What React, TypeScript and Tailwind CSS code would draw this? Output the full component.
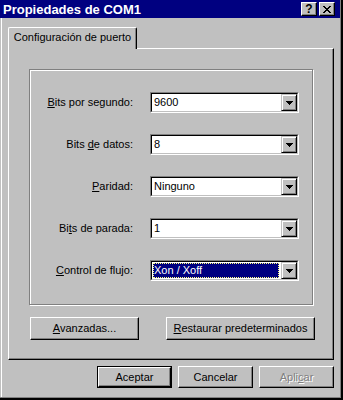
import React from 'react';

const raised =
    'border border-t-white border-l-white border-b-black border-r-black shadow-[inset_-1px_-1px_0_#808080]';

function DropButton() {
    return (
        <div className="flex h-[17px] w-[16px] shrink-0 items-center justify-center border border-t-[#c0c0c0] border-l-[#c0c0c0] border-b-black border-r-black bg-[#c0c0c0] shadow-[inset_1px_1px_0_#fff,inset_-1px_-1px_0_#808080]">
            <svg width="7" height="4" viewBox="0 0 7 4" className="block">
                <path d="M0 0h7v1H0zM1 1h5v1H1zM2 2h3v1H2zM3 3h1v1H3z" fill="#000" />
            </svg>
        </div>
    );
}

function Combo({ value, selected }: { value: string; selected?: boolean }) {
    return (
        <div className="h-[21px] w-[149px] border border-t-[#808080] border-l-[#808080] border-b-white border-r-white">
            <div className="flex h-full border border-t-black border-l-black border-b-[#c0c0c0] border-r-[#c0c0c0] bg-white">
                <div className="flex flex-1 p-px pr-[2px]">
                    {selected ? (
                        <div className="flex h-full w-full items-center border border-dotted border-[#ffff80] bg-[#000080] text-white">
                            {value}
                        </div>
                    ) : (
                        <div className="flex h-full w-full items-center pl-px text-black">{value}</div>
                    )}
                </div>
                <DropButton />
            </div>
        </div>
    );
}

function Row({ label, children }: { label: React.ReactNode; children: React.ReactNode }) {
    return (
        <div className="flex h-[21px] items-center gap-[17px]">
            <div className="w-[103px] text-right text-black">{label}</div>
            {children}
        </div>
    );
}

export default function App() {
    return (
        <div className="h-[400px] w-[343px] border-r-2 border-b-2 border-black bg-[#c0c0c0] font-['Liberation_Sans',Arial,sans-serif] text-[11px] leading-none">
            <div className="flex h-full flex-col border-r border-b border-[#808080]">
                {/* Title bar */}
                <div className="flex h-[18px] shrink-0 items-center justify-between bg-[#000080] pl-[3px] pr-[5px]">
                    <span className="text-[13px] font-bold text-white">Propiedades de COM1</span>
                    <div className="flex gap-[2px]">
                        <div className={`flex h-[14px] w-[16px] items-center justify-center bg-[#c0c0c0] ${raised}`}>
                            <span className="text-[12px] font-bold text-black">?</span>
                        </div>
                        <div className={`flex h-[14px] w-[16px] items-center justify-center bg-[#c0c0c0] ${raised}`}>
                            <svg width="8" height="7" viewBox="0 0 8 7" className="block">
                                <path d="M0 0h2v1H0zM6 0h2v1H6zM1 1h2v1H1zM5 1h2v1H5zM2 2h4v1H2zM3 3h2v1H3zM2 4h4v1H2zM1 5h2v1H1zM5 5h2v1H5zM0 6h2v1H0zM6 6h2v1H6z" fill="#000" />
                            </svg>
                        </div>
                    </div>
                </div>

                {/* Body */}
                <div className="ml-px flex flex-1 flex-col border-l border-white pl-[6px] pt-[9px]">
                    {/* Tab */}
                    <div className="relative z-10 -mb-px flex h-[22px] w-[129px] items-center justify-center rounded-t-[2px] border-t border-l border-r border-t-white border-l-white border-r-black bg-[#c0c0c0] pb-[2px] shadow-[inset_-1px_0_0_#808080] text-black">
                        Configuración de puerto
                    </div>

                    {/* Panel */}
                    <div className="h-[312px] w-[326px] border border-t-white border-l-white border-b-black border-r-black pl-[20px] pt-[20px] shadow-[inset_-1px_-1px_0_#808080]">
                        <div className="h-[236px] w-[284px] border border-[#808080] pt-[22px] shadow-[inset_1px_1px_0_#fff,1px_1px_0_#fff]">
                            <div className="flex flex-col gap-[21px]">
                                <Row label={<><u>B</u>its por segundo:</>}>
                                    <Combo value="9600" />
                                </Row>
                                <Row label={<>Bits <u>d</u>e datos:</>}>
                                    <Combo value="8" />
                                </Row>
                                <Row label={<><u>P</u>aridad:</>}>
                                    <Combo value="Ninguno" />
                                </Row>
                                <Row label={<>Bi<u>t</u>s de parada:</>}>
                                    <Combo value="1" />
                                </Row>
                                <Row label={<><u>C</u>ontrol de flujo:</>}>
                                    <Combo value="Xon / Xoff" selected />
                                </Row>
                            </div>
                        </div>

                        <div className="ml-px mt-[12px] flex">
                            <div className={`flex h-[23px] w-[109px] items-center justify-center text-black ${raised}`}>
                                <span><u>A</u>vanzadas...</span>
                            </div>
                            <div className={`ml-[27px] flex h-[23px] w-[149px] items-center justify-center text-black ${raised}`}>
                                <span><u>R</u>estaurar predeterminados</span>
                            </div>
                        </div>
                    </div>

                    {/* Dialog buttons */}
                    <div className="mt-[6px] flex w-[326px] justify-end gap-[6px]">
                        <div className="h-[22px] w-[75px] border border-black">
                            <div className={`flex h-full w-full items-center justify-center text-black ${raised}`}>
                                Aceptar
                            </div>
                        </div>
                        <div className={`flex h-[22px] w-[75px] items-center justify-center text-black ${raised}`}>
                            Cancelar
                        </div>
                        <div className={`flex h-[22px] w-[75px] items-center justify-center text-[#808080] [text-shadow:1px_1px_0_#fff] ${raised}`}>
                            <span>Apli<u>c</u>ar</span>
                        </div>
                    </div>
                </div>
            </div>
        </div>
    );
}
